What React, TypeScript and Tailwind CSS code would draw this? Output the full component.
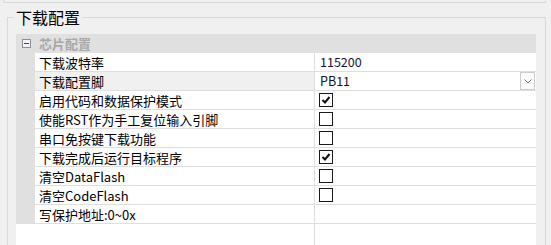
import React from "react";

type Row = {
  name: string;
  kind: "text" | "select" | "check" | "empty";
  value?: string;
  checked?: boolean;
  selected?: boolean;
};

const rows: Row[] = [
  { name: "下载波特率", kind: "text", value: "115200" },
  { name: "下载配置脚", kind: "select", value: "PB11", selected: true },
  { name: "启用代码和数据保护模式", kind: "check", checked: true },
  { name: "使能RST作为手工复位输入引脚", kind: "check", checked: false },
  { name: "串口免按键下载功能", kind: "check", checked: false },
  { name: "下载完成后运行目标程序", kind: "check", checked: true },
  { name: "清空DataFlash", kind: "check", checked: false },
  { name: "清空CodeFlash", kind: "check", checked: false },
  { name: "写保护地址:0~0x", kind: "empty" },
];

function CheckBox({ checked }: { checked?: boolean }) {
  return (
    <div className="w-[14px] h-[14px] border border-[#1a1a1a] bg-white flex items-center justify-center">
      {checked && (
        <svg width="10" height="10" viewBox="0 0 10 10">
          <path d="M1.5 5 L4 7.5 L8.5 2" fill="none" stroke="#111" strokeWidth="2" />
        </svg>
      )}
    </div>
  );
}

function ValueCell({ row }: { row: Row }) {
  if (row.kind === "text") {
    return <span className="pl-[5px] text-[12.5px] text-[#141432]">{row.value}</span>;
  }
  if (row.kind === "select") {
    return (
      <div className="flex flex-1 items-center justify-between h-full">
        <span className="pl-[5px] text-[12.5px] text-[#141432]">{row.value}</span>
        <div className="w-[15px] h-[18px] border border-[#cccccc] bg-[#fbfbfb] flex items-center justify-center mr-[1px]">
          <svg width="8" height="5" viewBox="0 0 8 5">
            <path d="M0.5 0.5 L4 4 L7.5 0.5" fill="none" stroke="#707070" strokeWidth="1" />
          </svg>
        </div>
      </div>
    );
  }
  if (row.kind === "check") {
    return (
      <div className="pl-[4px]">
        <CheckBox checked={row.checked} />
      </div>
    );
  }
  return null;
}

export default function App() {
  return (
    <div
      className="w-[551px] h-[245px] bg-[#f0f0f0] overflow-hidden text-black"
      style={{ fontFamily: '"Noto Sans CJK SC", sans-serif' }}
    >
      {/* bottom edge of the previous group */}
      <div className="ml-[3px] w-[543px] h-[3px] border-l border-r border-b border-[#d9d9d9]" />

      {/* 下载配置 group */}
      <div className="relative mt-[14px] ml-[7px] w-[539px] h-[240px] border border-[#d9d9d9] pl-[8px] pt-[16px]">
        <span className="absolute left-[6px] top-[-12px] bg-[#f0f0f0] px-[2px] text-[16px] leading-[22px]">
          下载配置
        </span>

        <div className="w-[520px] h-full bg-white flex flex-col">
          {/* category */}
          <div className="h-[19px] bg-[#e0e0e0] flex items-center">
            <div className="ml-[6px] w-[9px] h-[9px] border border-[#8a8fa0] bg-[#f4f4f4] flex items-center justify-center">
              <div className="w-[5px] h-px bg-[#3c4a6a]" />
            </div>
            <span className="ml-[8px] text-[13px] font-bold text-[#a8a8a8] leading-none">芯片配置</span>
          </div>

          {rows.map((row) => (
            <div key={row.name} className="flex h-[19px]">
              <div className="w-[19px] bg-[#e0e0e0]" />
              <div
                className={`w-[280px] border-r border-b border-[#dedede] flex items-center pl-[4px] text-[13px] leading-none ${
                  row.selected ? "bg-[#f0f0f0]" : "bg-white"
                }`}
              >
                {row.name}
              </div>
              <div className="flex-1 border-b border-[#dedede] flex items-center">
                <ValueCell row={row} />
              </div>
            </div>
          ))}

          <div className="flex-1 flex">
            <div className="w-[299px] border-r border-[#dedede]" />
          </div>
        </div>
      </div>
    </div>
  );
}
